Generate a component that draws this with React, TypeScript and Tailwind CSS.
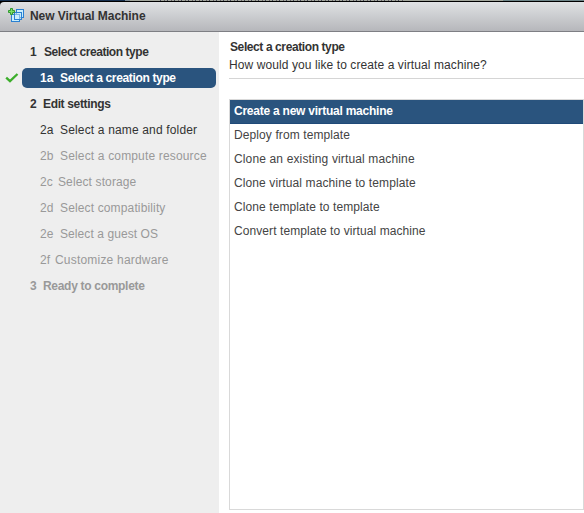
type Step = {
  num: string;
  label: string;
  level: "main" | "sub";
  state: "active" | "open" | "disabled";
  numClass: string;
  labelClass: string;
};

const steps: Step[] = [
  { num: "1", label: "Select creation type", level: "main", state: "open", numClass: "w-[14px]", labelClass: "tracking-[-0.45px]" },
  { num: "1a", label: "Select a creation type", level: "sub", state: "active", numClass: "w-5", labelClass: "tracking-[-0.35px]" },
  { num: "2", label: "Edit settings", level: "main", state: "open", numClass: "w-[13px]", labelClass: "tracking-[-0.35px]" },
  { num: "2a", label: "Select a name and folder", level: "sub", state: "open", numClass: "w-5", labelClass: "tracking-[0.16px]" },
  { num: "2b", label: "Select a compute resource", level: "sub", state: "disabled", numClass: "w-5", labelClass: "tracking-[0.16px]" },
  { num: "2c", label: "Select storage", level: "sub", state: "disabled", numClass: "w-[18px]", labelClass: "tracking-[0.12px]" },
  { num: "2d", label: "Select compatibility", level: "sub", state: "disabled", numClass: "w-5", labelClass: "tracking-[0.14px]" },
  { num: "2e", label: "Select a guest OS", level: "sub", state: "disabled", numClass: "w-5", labelClass: "tracking-[0.08px]" },
  { num: "2f", label: "Customize hardware", level: "sub", state: "disabled", numClass: "w-[15px]", labelClass: "tracking-[0.2px]" },
  { num: "3", label: "Ready to complete", level: "main", state: "disabled", numClass: "w-[13px]", labelClass: "tracking-[-0.3px]" },
];

const options = [
  { label: "Create a new virtual machine", tracking: "tracking-[-0.24px]" },
  { label: "Deploy from template", tracking: "tracking-[0.1px]" },
  { label: "Clone an existing virtual machine", tracking: "tracking-[0.14px]" },
  { label: "Clone virtual machine to template", tracking: "tracking-[0.11px]" },
  { label: "Clone template to template", tracking: "tracking-[0.09px]" },
  { label: "Convert template to virtual machine", tracking: "tracking-[0.08px]" },
];

function MachineIcon() {
  return (
    <svg width="17" height="17" viewBox="0 0 17 17" className="block shrink-0">
      <g fill="#c9edfc" stroke="#2a80d2">
        <rect x="8.5" y="1.5" width="7" height="8" />
        <rect x="3.5" y="6.5" width="8" height="7" />
        <rect x="6.5" y="4.5" width="7" height="7" fillOpacity=".5" />
      </g>
      <path d="M2.5 .5h2v2h2v2h-2v2h-2v-2h-2v-2h2z" fill="#65ce54" stroke="#309a30" />
      <path d="M3.5 1v5M1 3.5h5" stroke="#7ee068" />
    </svg>
  );
}

function Check() {
  return (
    <svg width="14" height="12" viewBox="0 0 14 12" className="block">
      <path d="M1.2 5.6 5 9.2 12.5 2" fill="none" stroke="#3cae2b" strokeWidth="2.3" />
    </svg>
  );
}

function StepRow({ step }: { step: Step }) {
  const active = step.state === "active";
  const color = active ? "text-white" : step.state === "disabled" ? "text-[#999999]" : "text-[#333333]";
  const bold = step.level === "main" || active ? "font-bold" : "";
  return (
    <li className="flex h-[26px] items-center">
      <span className="w-[22px] pl-[5px]">{active && <Check />}</span>
      <div
        className={`flex h-5 w-[194px] items-center whitespace-nowrap rounded-[5px] ${color} ${bold} ${
          step.level === "main" ? "pl-2" : "pl-[18px]"
        } ${active ? "bg-[#2a547e]" : ""}`}
      >
        <span className={`shrink-0 ${step.numClass}`}>{step.num}</span>
        <span className={step.labelClass}>{step.label}</span>
      </div>
    </li>
  );
}

export default function App() {
  return (
    <div className="flex h-[513px] w-[584px] flex-col overflow-hidden bg-white font-['Liberation_Sans',Arial,sans-serif] text-[12px] leading-[14px] text-[#333333]">
      <div className="flex h-px shrink-0">
        <div className="w-[125px] bg-[#16304f]" />
        <div className="w-[5px] bg-[#7e8d95]" />
        <div className="w-[30px] bg-[#a2a69c]" />
        <div className="w-[245px] bg-[repeating-linear-gradient(90deg,#47485a_0px_1px,#a2a69c_1px_4px,#65606a_4px_5px,#a2a69c_5px_7px)]" />
        <div className="w-[98px] bg-[#a2a69c]" />
        <div className="grow bg-[#6d8588]" />
      </div>
      <header className="h-[31px] shrink-0 bg-black">
        <div className="mt-px flex h-[30px] items-center rounded-tl-[4px] border-b border-[#7e7f84] bg-linear-to-b from-[#e0e2e4] to-[#b6b7bb] pl-2">
          <MachineIcon />
          <h1 className="ml-[5px] -mt-px text-[12px] font-bold tracking-[-0.05px]">New Virtual Machine</h1>
        </div>
      </header>
      <div className="flex min-h-0 grow">
        <nav className="w-[219px] shrink-0 bg-[#eeeeee] pt-[7px]">
          <ol>
            {steps.map((step) => (
              <StepRow key={step.num} step={step} />
            ))}
          </ol>
        </nav>
        <main className="flex grow flex-col pb-[3px] pl-[10px]">
          <div className="h-[47px] border-b border-[#d5d5d5] pt-2">
            <h2 className="pl-px font-bold tracking-[-0.4px]">Select a creation type</h2>
            <p className="mt-1 tracking-[0.09px]">How would you like to create a virtual machine?</p>
          </div>
          <ul className="mt-5 grow border border-[#d9d9d9]">
            {options.map((option, i) => (
              <li
                key={option.label}
                className={`flex h-6 items-center pl-1 ${option.tracking} ${
                  i === 0 ? "border-b border-[#1f4a78] bg-[#2a547e] pb-px font-bold text-white" : "pb-[3px] text-[#444444]"
                }`}
              >
                {option.label}
              </li>
            ))}
          </ul>
        </main>
      </div>
    </div>
  );
}
